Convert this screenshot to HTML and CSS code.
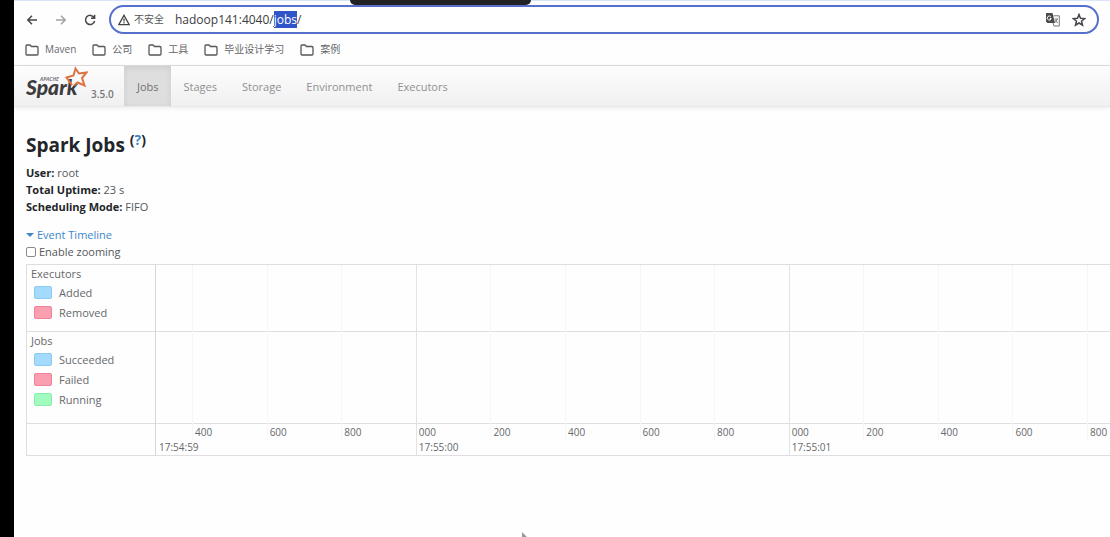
FILE: index.html
```
<!DOCTYPE html>
<html lang="en">
<head>
<meta charset="utf-8">
<title>Spark Jobs</title>
<link rel="stylesheet" href="styles.css">
</head>
<body>
<div class="notch"></div>
<div class="window">
  <header class="browser">
    <div class="toolbar">
      <button class="tool" aria-label="Back"><svg width="12" height="12" viewBox="0 0 12 12"><path d="M11 6H2M6 1.800L1.800 6L6 10.200"/></svg></button>
      <button class="tool tool-off" aria-label="Forward"><svg width="12" height="12" viewBox="0 0 12 12"><path d="M1 6H10M6 1.800L10.200 6L6 10.200"/></svg></button>
      <button class="tool" aria-label="Reload"><svg width="12" height="12" viewBox="0 0 12 12"><path d="M10 3.500A4.600 4.600 0 1 0 10.600 7M10.600 .8V4.200H7"/></svg></button>
      <div class="address">
        <svg class="warn" width="12" height="12" viewBox="0 0 12 12"><path d="M6 1.200L11.200 10.600H.8ZM6 4.600V7.400M6 8.300V9.500"/></svg>
        <span class="insecure" lang="zh">不安全</span>
        <input class="url" type="text" aria-label="Address" value="hadoop141:4040/jobs/" spellcheck="false">
        <button class="tool" aria-label="Translate"><svg width="14" height="14" viewBox="0 0 14 14"><path class="solid" d="M0 0H6.500L9 10H1.500L0 8.500Z"/><path class="thin" d="M7.500 2.800H13.300V13H8L7 10"/><path class="thin" d="M8.500 6H12M11 6L9.300 9.500M9.600 7.200L11.800 10"/><path class="paper" d="M4.800 3.800A2 2 0 1 0 5.200 5.500H3.700"/></svg></button>
        <button class="tool" aria-label="Bookmark"><svg width="14" height="14" viewBox="0 0 14 14"><path d="M7 1.500L8.500 5.300L12.600 5.600L9.500 8.200L10.500 12.200L7 10L3.500 12.200L4.500 8.200L1.400 5.600L5.500 5.300Z"/></svg></button>
      </div>
    </div>
    <nav class="bookmarks" aria-label="Bookmarks" lang="zh">
      <a href="#"><svg width="14" height="12" viewBox="0 0 14 12"><path d="M1 10V2Q1 1 2 1H5L6.500 2.500H12Q13 2.500 13 3.500V10Q13 11 12 11H2Q1 11 1 10Z"/></svg>Maven</a>
      <a href="#"><svg width="14" height="12" viewBox="0 0 14 12"><path d="M1 10V2Q1 1 2 1H5L6.500 2.500H12Q13 2.500 13 3.500V10Q13 11 12 11H2Q1 11 1 10Z"/></svg>公司</a>
      <a href="#"><svg width="14" height="12" viewBox="0 0 14 12"><path d="M1 10V2Q1 1 2 1H5L6.500 2.500H12Q13 2.500 13 3.500V10Q13 11 12 11H2Q1 11 1 10Z"/></svg>工具</a>
      <a href="#"><svg width="14" height="12" viewBox="0 0 14 12"><path d="M1 10V2Q1 1 2 1H5L6.500 2.500H12Q13 2.500 13 3.500V10Q13 11 12 11H2Q1 11 1 10Z"/></svg>毕业设计学习</a>
      <a href="#"><svg width="14" height="12" viewBox="0 0 14 12"><path d="M1 10V2Q1 1 2 1H5L6.500 2.500H12Q13 2.500 13 3.500V10Q13 11 12 11H2Q1 11 1 10Z"/></svg>案例</a>
    </nav>
  </header>

  <nav class="navbar" aria-label="Spark">
    <a class="brand" href="#">
      <svg width="62" height="36" viewBox="0 0 62 36" role="img" aria-label="Apache Spark">
        <text class="logo-small" x="14" y="15">APACHE</text>
        <text class="logo-word" x="0" y="29">Spark</text>
        <path class="logo-star" d="M46 19L40.500 11.500L47.500 9.500L49.500 2.500L53 7.500L60.500 6.500L56 12L58.500 19.500L51.500 16.500L48 19.500"/>
      </svg>
      <span class="version">3.5.0</span>
    </a>
    <a class="tab active" href="#">Jobs</a>
    <a class="tab" href="#">Stages</a>
    <a class="tab" href="#">Storage</a>
    <a class="tab" href="#">Environment</a>
    <a class="tab" href="#">Executors</a>
  </nav>

  <main class="content">
    <h1 class="title">Spark Jobs <sup>(<a href="#">?</a>)</sup></h1>
    <ul class="facts">
      <li><strong>User:</strong> root</li>
      <li><strong>Total Uptime:</strong> 23 s</li>
      <li><strong>Scheduling Mode:</strong> FIFO</li>
    </ul>
    <a class="expand" href="#"><span class="caret"></span>Event Timeline</a>
    <label class="zooming"><input type="checkbox">Enable zooming</label>

    <section class="timeline" aria-label="Event Timeline">
      <div class="labels">
        <div class="group executors">
          <div class="group-name">Executors</div>
          <div class="key"><span class="swatch blue"></span>Added</div>
          <div class="key"><span class="swatch red"></span>Removed</div>
        </div>
        <div class="group jobs">
          <div class="group-name">Jobs</div>
          <div class="key"><span class="swatch blue"></span>Succeeded</div>
          <div class="key"><span class="swatch red"></span>Failed</div>
          <div class="key"><span class="swatch green"></span>Running</div>
        </div>
        <div class="axis"></div>
      </div>
      <div class="plot">
        <div class="ticks">
          <div class="tick first"><div class="minor"></div><div class="major">17:54:59</div></div>
          <div class="tick"><div class="minor">400</div></div>
          <div class="tick"><div class="minor">600</div></div>
          <div class="tick"><div class="minor">800</div></div>
          <div class="tick second"><div class="minor">000</div><div class="major">17:55:00</div></div>
          <div class="tick"><div class="minor">200</div></div>
          <div class="tick"><div class="minor">400</div></div>
          <div class="tick"><div class="minor">600</div></div>
          <div class="tick"><div class="minor">800</div></div>
          <div class="tick second"><div class="minor">000</div><div class="major">17:55:01</div></div>
          <div class="tick"><div class="minor">200</div></div>
          <div class="tick"><div class="minor">400</div></div>
          <div class="tick"><div class="minor">600</div></div>
          <div class="tick"><div class="minor">800</div></div>
        </div>
        <div class="group executors"></div>
        <div class="group jobs"></div>
        <div class="axis"></div>
      </div>
    </section>
  </main>
</div>
<svg class="pointer" width="8" height="12" viewBox="0 0 8 12"><path d="M0 0L7 7H3L0 10Z"/></svg>
<script src="script.js"></script>
</body>
</html>
```
FILE: styles.css
```
* { box-sizing: border-box; }

body {
  margin: 0;
  min-height: 100vh;
  border-left: 14px solid #000;
  background: #fefefe;
  color: #33373b;
  font: 11px/17px "Open Sans", "Noto Sans", "Noto Sans CJK SC", sans-serif;
  overflow: hidden;
}

a { color: #3c86c9; text-decoration: none; }
button { padding: 0; border: 0; background: none; display: flex; }
svg { flex: none; fill: none; }

.notch {
  position: absolute;
  z-index: 1;
  top: 0;
  left: 350px;
  width: 181px;
  height: 5px;
  border-radius: 0 0 6px 6px;
  background: #222224;
}

/* Browser chrome */
.browser {
  border-top: 1px solid #d9e4fa;
  border-bottom: 1px solid #dedee0;
}

.toolbar {
  display: flex;
  align-items: center;
  gap: 17px;
  padding: 4px 11px 0 12px;
}

.tool svg { stroke: #46474a; stroke-width: 1.5; }
.tool-off svg { stroke: #a2a2a4; }
.tool .solid { fill: #4b4b4d; stroke: none; }
.tool .thin { stroke-width: 1; stroke: #77777a; }
.tool .paper { stroke-width: 1; stroke: #fff; }

.address {
  flex: 1;
  display: flex;
  align-items: center;
  height: 29px;
  margin-left: -4px;
  padding: 0 11px 0 7px;
  border: 2px solid #5670cc;
  border-radius: 15px;
  background: #fff;
}

.address .tool { margin-left: 12px; }
.warn { stroke: #444; stroke-width: 1.3; }
.insecure { margin: 0 11px 0 4px; font-size: 10px; color: #555; }

.url {
  flex: 1;
  min-width: 0;
  padding: 0;
  border: 0;
  outline: 0;
  background: none;
  color: #3c3c3f;
  font: 12px/17px "Open Sans", "Noto Sans", sans-serif;
}

.url::selection { background: #2f55c8; color: #fff; }

.bookmarks {
  display: flex;
  gap: 16px;
  height: 31px;
  padding: 0 11px;
}

.bookmarks a {
  display: flex;
  align-items: center;
  gap: 6px;
  color: #66666a;
  font-size: 10px;
}

.bookmarks svg { stroke: #55565a; stroke-width: 1.3; }

/* Spark navigation */
.navbar {
  display: flex;
  height: 41px;
  border-bottom: 1px solid #e8e8e8;
  background: linear-gradient(#fdfdfd, #f0f0f0);
  box-shadow: 0 1px 5px rgba(0, 0, 0, .08);
}

.brand {
  display: flex;
  align-items: flex-start;
  gap: 3px;
  width: 110px;
  padding-left: 12px;
}

.version {
  padding-top: 20px;
  color: #77777a;
  font-size: 10px;
  font-weight: 600;
}

.logo-small { fill: #77777a; font: italic 700 5px "Open Sans", sans-serif; }
.logo-word { fill: #3c3c40; font: italic 900 21px Lato, sans-serif; }
.logo-star { stroke: #dc7341; stroke-width: 2; }

.tab {
  display: flex;
  align-items: center;
  padding: 0 12px 0 13px;
  color: #909093;
  font-size: 11px;
}

.tab.active {
  background: #dedede;
  color: #707073;
  box-shadow: inset 0 2px 6px rgba(0, 0, 0, .08);
}

/* Page content */
.content { padding: 22px 0 0 12px; }

.title {
  margin: 0;
  color: #222529;
  font-size: 19px;
  font-weight: 700;
  line-height: 32px;
}

.title sup { font-size: 14px; line-height: 0; }

.facts { margin: 3px 0 11px; padding: 0; list-style: none; color: #55585c; }
.facts strong { color: #222529; }

.expand { display: flex; align-items: center; gap: 3px; }

.caret {
  border: 4px solid transparent;
  border-top-color: #3c86c9;
  border-bottom: 0;
}

.zooming { display: flex; align-items: center; gap: 3px; color: #55585c; }

.zooming input {
  appearance: none;
  width: 10px;
  height: 10px;
  margin: 0;
  border: 1px solid #8a8a8d;
  border-radius: 2px;
  background: #fff;
}

/* Timeline */
.timeline {
  display: flex;
  margin-top: 4px;
  border: 1px solid #dedee0;
  border-right: 0;
  color: #66686b;
}

.labels { width: 129px; border-right: 1px solid #d6d6d8; }
.plot { position: relative; flex: 1; }
.group { border-bottom: 1px solid #dedee0; padding-left: 4px; }
.executors { height: 67px; }
.jobs { height: 92px; }
.axis { height: 31px; }
.key { display: flex; align-items: center; gap: 7px; height: 20px; padding-left: 3px; }

.swatch { width: 18px; height: 13px; border: 1px solid; border-radius: 2px; }
.blue { background: #a4dbfc; border-color: #8bcbf3; }
.red { background: #fb9fb0; border-color: #ee839a; }
.green { background: #a3fcbf; border-color: #88edaa; }

/* Tick lines run behind the groups across the full plot height */
.ticks {
  position: absolute;
  inset: 0;
  display: grid;
  grid-template-columns: 361fr repeat(12, 746fr) 230fr;
}

.tick {
  display: flex;
  flex-direction: column;
  justify-content: flex-end;
  min-width: 0;
  padding-bottom: 15px;
  background: linear-gradient(#f6f6f8, #f6f6f8) 0 0 / 1px calc(100% - 15px) no-repeat;
  white-space: nowrap;
}

.tick.first, .tick.second { padding-bottom: 0; }
.tick.first { background: none; }
.tick.second { background: linear-gradient(#e2e2e4, #e2e2e4) 0 0 / 1px 100% no-repeat; }
.minor, .major { padding-left: 3px; font-size: 10px; line-height: 15px; }
.minor { min-height: 15px; }

.pointer { position: absolute; left: 522px; top: 532px; fill: #99999b; }
```
FILE: script.js
```
// Highlight the path part of the address
const url = document.querySelector('.url');
const start = url.value.indexOf('jobs');
url.focus();
url.setSelectionRange(start, start + 4);
```
